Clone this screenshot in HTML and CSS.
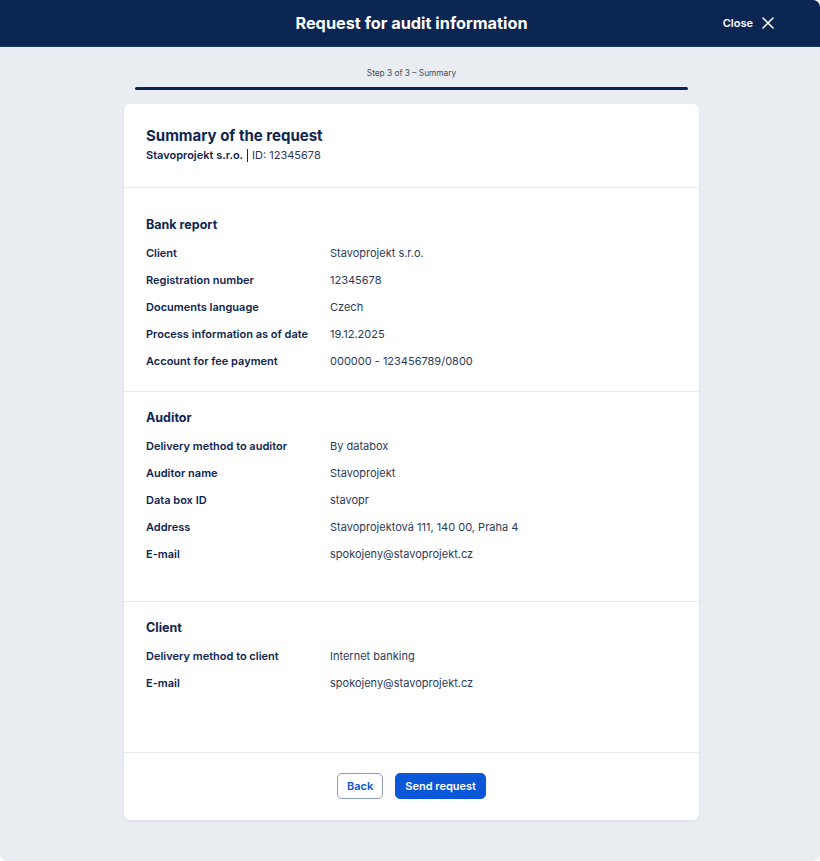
FILE: index.html
```html
<!DOCTYPE html>
<html lang="en">
<head>
<meta charset="utf-8">
<title>Request for audit information</title>
<link rel="stylesheet" href="styles.css">
</head>
<body>
<div class="modal">
  <header class="topbar">
    <h1 class="topbar-title">Request for audit information</h1>
    <button class="close-btn" type="button">
      <span>Close</span>
      <svg class="close-icon" width="12" height="12" viewBox="0 0 12 12" aria-hidden="true">
        <path d="M1 1 L11 11 M11 1 L1 11" stroke="#ffffff" stroke-width="1.5" stroke-linecap="round" fill="none"/>
      </svg>
    </button>
  </header>

  <main class="content">
    <div class="stepper">
      <div class="step-label">Step 3 of 3 – Summary</div>
      <div class="step-bar"></div>
    </div>

    <section class="card">
      <div class="card-head">
        <h2 class="card-title">Summary of the request</h2>
        <div class="card-sub"><strong>Stavoprojekt s.r.o.</strong><span class="sep"></span>ID: 12345678</div>
      </div>

      <div class="section section-bank">
        <h3 class="section-title">Bank report</h3>
        <dl class="rows">
          <div class="row"><dt>Client</dt><dd>Stavoprojekt s.r.o.</dd></div>
          <div class="row"><dt>Registration number</dt><dd>12345678</dd></div>
          <div class="row"><dt>Documents language</dt><dd>Czech</dd></div>
          <div class="row"><dt>Process information as of date</dt><dd>19.12.2025</dd></div>
          <div class="row"><dt>Account for fee payment</dt><dd>000000 - 123456789/0800</dd></div>
        </dl>
      </div>

      <div class="section section-auditor">
        <h3 class="section-title">Auditor</h3>
        <dl class="rows">
          <div class="row"><dt>Delivery method to auditor</dt><dd>By databox</dd></div>
          <div class="row"><dt>Auditor name</dt><dd>Stavoprojekt</dd></div>
          <div class="row"><dt>Data box ID</dt><dd>stavopr</dd></div>
          <div class="row"><dt>Address</dt><dd>Stavoprojektová 111, 140 00, Praha 4</dd></div>
          <div class="row"><dt>E-mail</dt><dd>spokojeny@stavoprojekt.cz</dd></div>
        </dl>
      </div>

      <div class="section section-client">
        <h3 class="section-title">Client</h3>
        <dl class="rows">
          <div class="row"><dt>Delivery method to client</dt><dd>Internet banking</dd></div>
          <div class="row"><dt>E-mail</dt><dd>spokojeny@stavoprojekt.cz</dd></div>
        </dl>
      </div>

      <div class="card-foot">
        <button class="btn btn-outline" type="button">Back</button>
        <button class="btn btn-primary" type="button">Send request</button>
      </div>
    </section>
  </main>
</div>
</body>
</html>
```

FILE: styles.css
```css
* { box-sizing: border-box; }

html, body {
  margin: 0;
  padding: 0;
  background: #ffffff;
}

body {
  font-family: Inter, "Noto Sans", "Liberation Sans", sans-serif;
  color: #0f2552;
}

.modal {
  min-height: 861px;
  background: #e9edf1;
  border-top-right-radius: 7px;
  border-bottom-left-radius: 7px;
  border-bottom-right-radius: 7px;
  overflow: hidden;
}

.topbar {
  height: 47px;
  background: #0c2654;
  border-bottom: 1px solid #1d3866;
  display: flex;
  align-items: center;
  justify-content: center;
  position: relative;
}

.topbar-title {
  margin: 0;
  font-size: 16.3px;
  font-weight: 700;
  color: #ffffff;
  padding-left: 3px;
}

.close-btn {
  position: absolute;
  right: 46px;
  top: 0;
  height: 46px;
  display: flex;
  align-items: center;
  gap: 9px;
  background: none;
  border: none;
  padding: 0;
  color: #ffffff;
  font-family: inherit;
  font-size: 11px;
  font-weight: 600;
  cursor: pointer;
}

.close-icon { display: block; }

.content {
  display: flex;
  flex-direction: column;
  align-items: center;
  padding-left: 3px;
}

.stepper {
  margin-top: 20px;
  display: flex;
  flex-direction: column;
  align-items: center;
}

.step-label {
  font-size: 8.3px;
  line-height: 12px;
  color: #3c4a63;
}

.step-bar {
  margin-top: 8px;
  width: 553px;
  height: 3px;
  border-radius: 2px;
  background: #0c2654;
}

.card {
  margin-top: 14px;
  width: 575px;
  background: #ffffff;
  border-radius: 6px;
  box-shadow: 0 1px 3px rgba(15, 37, 82, 0.08);
}

.card-head {
  padding: 22px 22px 24px;
  border-bottom: 1px solid #e8ecf1;
}

.card-title {
  margin: 0;
  font-size: 15px;
  line-height: 20px;
  font-weight: 700;
  color: #0f2552;
}

.card-sub {
  margin-top: 1px;
  font-size: 11px;
  line-height: 16px;
  color: #2b3a5a;
  display: flex;
  align-items: center;
}

.card-sub strong {
  font-weight: 600;
  color: #0f2552;
}

.sep {
  display: inline-block;
  width: 1px;
  height: 13px;
  background: #0f2552;
  margin: 0 4px 0 4px;
}

.section {
  padding: 15px 22px 0;
  border-bottom: 1px solid #e8ecf1;
}

.section-bank { padding-top: 27px; padding-bottom: 17px; }
.section-auditor { padding-top: 16px; padding-bottom: 34px; }
.section-client { padding-top: 16px; padding-bottom: 56px; }

.section-title {
  margin: 0 0 4px;
  font-size: 12.5px;
  line-height: 20px;
  font-weight: 700;
  color: #0f2552;
}

.rows { margin: 0; }

.row {
  display: flex;
  height: 27px;
  align-items: center;
  font-size: 11px;
}

.row dt {
  width: 184px;
  flex: none;
  font-weight: 600;
  color: #0f2552;
}

.row dd {
  margin: 0;
  font-weight: 400;
  color: #2b3a5a;
}

.card-foot {
  display: flex;
  justify-content: center;
  gap: 12px;
  padding: 20px 0 21px;
}

.btn {
  height: 26px;
  border-radius: 5px;
  font-family: inherit;
  font-size: 11px;
  font-weight: 600;
  white-space: nowrap;
  cursor: pointer;
}

.btn-outline {
  padding: 0 9px;
  background: #ffffff;
  border: 1px solid #8e9cb6;
  color: #0a57d8;
}

.btn-primary {
  padding: 0 9px;
  background: #0a57d8;
  border: 1px solid #0a57d8;
  color: #ffffff;
}
```
